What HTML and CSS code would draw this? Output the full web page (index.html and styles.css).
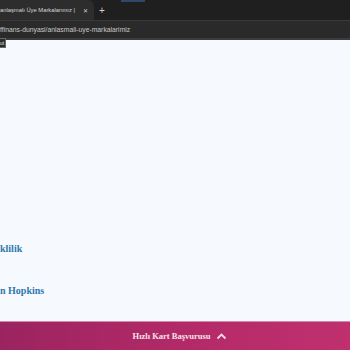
FILE: index.html
```html
<!DOCTYPE html>
<html lang="tr">
<head>
  <meta charset="UTF-8">
  <meta name="viewport" content="width=device-width, initial-scale=1">
  <title>Anlaşmalı Üye Markalarımız</title>
  <link rel="stylesheet" href="styles.css">
</head>
<body>

<div class="tabbar">
  <div class="tab">
    <span class="tab-title">anlaşmalı Üye Markalarımız |</span>
    <span class="tab-close">&#x2715;</span>
  </div>
  <span class="tab-new">+</span>
  <span class="tab-accent"></span>
</div>

<div class="addressbar">
  <span class="url">ffinans-dunyasi/anlasmali-uye-markalarimiz</span>
</div>

<div class="page">
  <div class="tooltip">ut</div>

  <div class="list">
    <div class="item">klilik</div>
    <div class="item">n Hopkins</div>
  </div>
</div>

<!-- Sticky application bar -->
<div class="apply-bar">
  <span class="apply-text">Hızlı Kart Başvurusu</span>
  <svg class="apply-icon" width="11" height="8" viewBox="0 0 11 8">
    <path d="M1.5 6.5 L5.5 2.5 L9.5 6.5" fill="none" stroke="#f4dbe7" stroke-width="1.8"/>
  </svg>
</div>

</body>
</html>
```

FILE: styles.css
```css
body {
  margin: 0;
  width: 350px;
  height: 350px;
  overflow: hidden;
  display: flex;
  flex-direction: column;
  font-family: "Liberation Sans", Arial, sans-serif;
  background-color: #f6f9fd;
}

.tabbar {
  height: 20px;
  background-color: #1f1f1f;
  display: flex;
  align-items: center;
  position: relative;
}

.tab {
  width: 94px;
  height: 20px;
  background-color: #2d2d2d;
  display: flex;
  align-items: center;
  justify-content: space-between;
  padding-right: 6px;
  box-sizing: border-box;
  border-radius: 0 6px 0 0;
}

.tab-title {
  color: #d8d8d8;
  font-size: 5.8px;
  white-space: nowrap;
}

.tab-close {
  color: #d0d0d0;
  font-size: 6px;
}

.tab-new {
  color: #d0d0d0;
  font-size: 10px;
  margin-left: 5px;
}

.tab-accent {
  position: absolute;
  left: 121px;
  top: 0;
  width: 24px;
  height: 2px;
  background-color: #2d4a6a;
}

.addressbar {
  height: 17px;
  background-color: #2a2a2a;
  border-top: 1px solid #3a3a3a;
  border-bottom: 2px solid #3c3c3c;
  display: flex;
  align-items: center;
}

.url {
  color: #c8c8c8;
  font-size: 6.8px;
  white-space: nowrap;
}

.page {
  flex: 1;
  position: relative;
  background-color: #f6f9fd;
}

.tooltip {
  position: absolute;
  top: -2px;
  left: 0;
  background-color: #2b2b2b;
  color: #e0e0e0;
  font-size: 5px;
  line-height: 6px;
  padding: 1px 1px 1px 0;
  border: 1px solid #666;
  border-left: none;
}

.list {
  padding-top: 202px;
  display: flex;
  flex-direction: column;
  gap: 28px;
}

.item {
  height: 14px;
  font-family: "Liberation Serif", serif;
  font-weight: bold;
  font-size: 10px;
  line-height: 14px;
  color: #2e78ad;
  white-space: nowrap;
}

.apply-bar {
  height: 28px;
  border-top: 1px solid #d48aaf;
  background: linear-gradient(90deg, #9b2460, #b42a68 55%, #c0306f);
  display: flex;
  justify-content: center;
  align-items: center;
  gap: 6px;
  padding-left: 10px;
}

.apply-text {
  font-family: "Liberation Serif", serif;
  font-weight: bold;
  font-size: 8.5px;
  color: #f6e3ec;
}
```
